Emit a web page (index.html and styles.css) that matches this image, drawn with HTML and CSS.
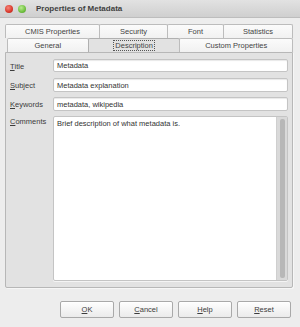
FILE: index.html
```html
<!DOCTYPE html>
<html lang="en">
<head>
    <meta charset="UTF-8">
    <title>Properties of Metadata</title>
    <link rel="stylesheet" href="styles.css">
</head>
<body>

    <div class="window">
        <div class="titlebar">
            <span class="dot red"></span>
            <span class="dot green"></span>
            <span class="title">Properties of Metadata</span>
        </div>

        <div class="content">
            <div class="tabrow top">
                <div class="tab w-cmis">CMIS Properties</div>
                <div class="tab w-sec">Security</div>
                <div class="tab w-font">Font</div>
                <div class="tab w-stat">Statistics</div>
            </div>
            <div class="tabrow bottom">
                <div class="tab w-gen">General</div>
                <div class="tab w-desc active"><span class="focus">Description</span></div>
                <div class="tab w-cust">Custom Properties</div>
            </div>

            <div class="panel">
                <label class="lbl"><u>T</u>itle</label>
                <div class="field">Metadata</div>

                <label class="lbl"><u>S</u>ubject</label>
                <div class="field">Metadata explanation</div>

                <label class="lbl"><u>K</u>eywords</label>
                <div class="field">metadata, wikipedia</div>

                <label class="lbl top-lbl"><u>C</u>omments</label>
                <div class="field area">
                    <div class="area-text">Brief description of what metadata is.</div>
                    <div class="scroll"><div class="thumb"></div></div>
                </div>
            </div>

            <div class="buttons">
                <button><u>O</u>K</button>
                <button><u>C</u>ancel</button>
                <button><u>H</u>elp</button>
                <button><u>R</u>eset</button>
            </div>
        </div>
    </div>

</body>
</html>
```

FILE: styles.css
```css
/* General */
body {
    margin: 0;
    padding: 0;
    font-family: 'Liberation Sans', Arial, sans-serif;
    font-size: 7.5px;
    color: #3c3c3c;
    background: #ededed;
}

.window {
    width: 300px;
    height: 327px;
    background: #ededed;
    overflow: hidden;
}

/* Title bar */
.titlebar {
    height: 18px;
    display: flex;
    align-items: center;
    background: linear-gradient(to bottom, #e2e2e2, #cfcfcf);
    border-bottom: 1px solid #bdbdbd;
    box-sizing: border-box;
    padding-left: 5px;
}

.dot {
    width: 8px;
    height: 8px;
    border-radius: 50%;
    margin-right: 5px;
}

.dot.red {
    background: radial-gradient(circle at 40% 35%, #f7857a, #d9382b 60%, #a82a20);
}

.dot.green {
    background: radial-gradient(circle at 40% 35%, #b8ec8e, #6fbf3f 60%, #4b9226);
}

.title {
    margin-left: 5px;
    font-weight: bold;
    font-size: 8px;
    color: #3f3f3f;
}

/* Content */
.content {
    padding: 6px 7px 0 5px;
}

.tabrow {
    display: flex;
    height: 14px;
}

.tabrow.bottom {
    margin-left: 2px;
}

.tab {
    box-sizing: border-box;
    height: 14px;
    border: 1px solid #bcbcbc;
    border-bottom: none;
    border-radius: 2px 2px 0 0;
    background: linear-gradient(to bottom, #fbfbfb, #f1f1f1);
    display: flex;
    align-items: center;
    justify-content: center;
    color: #444;
}

.tab + .tab {
    margin-left: -1px;
}

.tab.active {
    background: #e2e2e2;
    border-color: #b0b0b0;
}

.focus {
    border: 1px dotted #555;
    padding: 0 1px;
    line-height: 9px;
}

.w-cmis { width: 95px; }
.w-sec  { width: 69px; }
.w-font { width: 57px; }
.w-stat { width: 70px; }
.w-gen  { width: 82px; }
.w-desc { width: 93px; }
.w-cust { width: 114px; }

/* Panel */
.panel {
    box-sizing: border-box;
    height: 236px;
    border: 1px solid #b7b7b7;
    border-radius: 0 0 2px 2px;
    background: #e2e2e2;
    display: grid;
    grid-template-columns: 43px 235px;
    grid-template-rows: 14px 14px 14px 1fr;
    row-gap: 5px;
    padding: 6px 4px 6px 4px;
    box-shadow: 1px 1px 0 #f6f6f6;
}

.lbl {
    display: flex;
    align-items: center;
    color: #3c3c3c;
}

.lbl.top-lbl {
    align-items: flex-start;
    padding-top: 1px;
}

.field {
    box-sizing: border-box;
    background: #fff;
    border: 1px solid #c4c4c4;
    border-radius: 2px;
    box-shadow: inset 0 1px 1px #e8e8e8;
    padding: 0 3px;
    display: flex;
    align-items: center;
    color: #333;
}

.field:nth-of-type(1) { margin-bottom: 1px; }

.field.area {
    align-items: stretch;
    padding: 0;
    box-shadow: 0 1px 0 #f4f4f4;
}

.area-text {
    flex: 1;
    padding: 2px 3px;
}

.scroll {
    width: 10px;
    background: #d9d9d9;
    border-left: 1px solid #cfcfcf;
    display: flex;
    justify-content: center;
    padding: 2px 0;
}

.thumb {
    width: 5px;
    background: #b7b7b7;
    border-radius: 2px;
}

/* Buttons */
.buttons {
    display: flex;
    justify-content: flex-end;
    gap: 5px;
    margin-top: 13px;
    margin-right: 2px;
}

button {
    width: 54px;
    height: 17px;
    padding: 0;
    font-family: inherit;
    font-size: 7.5px;
    color: #3c3c3c;
    border: 1px solid #a9a9a9;
    border-radius: 2px;
    background: linear-gradient(to bottom, #fefefe, #ebebeb);
    box-shadow: inset 0 1px 0 #fff;
}
```
